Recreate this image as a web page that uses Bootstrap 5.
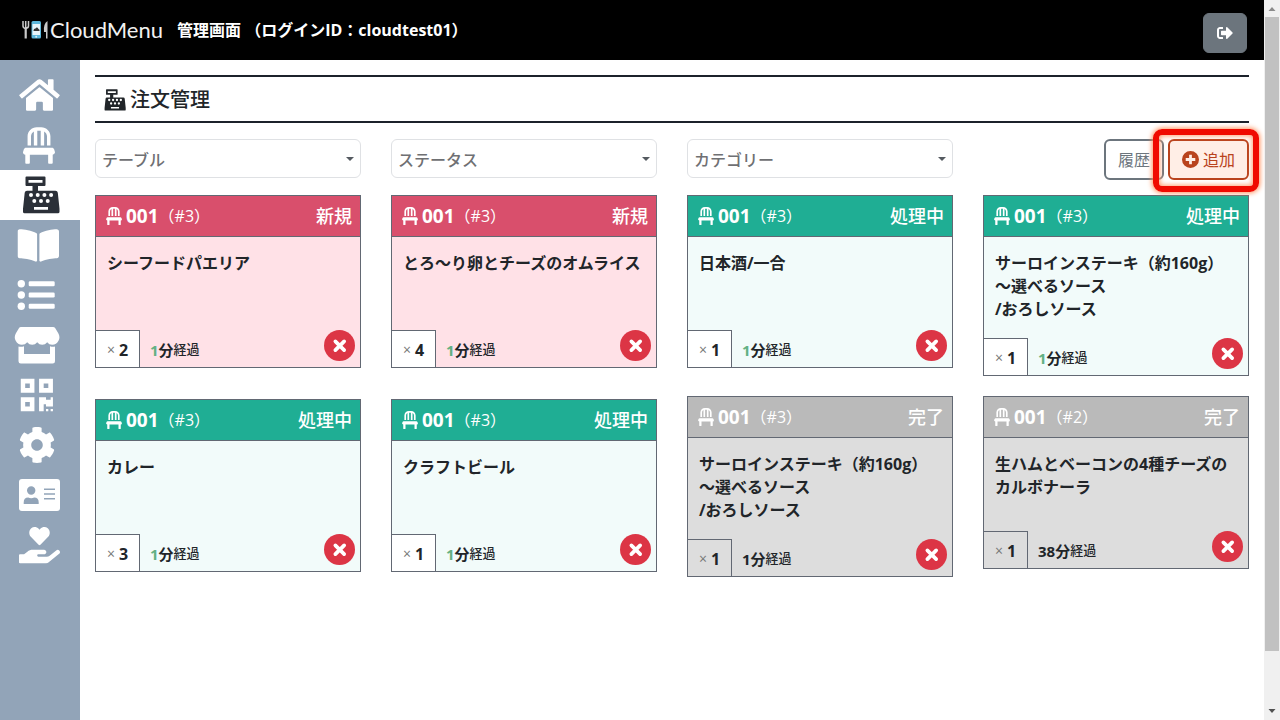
<!DOCTYPE html>
<html lang="ja">
<head>
<meta charset="utf-8">
<meta name="viewport" content="width=device-width, initial-scale=1">
<title>CloudMenu 管理画面 - 注文管理</title>
<link href="https://cdn.jsdelivr.net/npm/bootstrap@5.3.0/dist/css/bootstrap.min.css" rel="stylesheet">
<style>
  body { font-family: "Open Sans", "Noto Sans CJK JP", sans-serif; color: #212529; }
  .topbar { height: 60px; background: #000; padding: 0 17px 0 22px; }
  .brand-text { font: 400 22px/28px "Lato", sans-serif; color: #f1f1f1; }
  .topbar-title { font-size: 16px; line-height: 24px; margin-left: 14px; }
  .logout { width: 44px; height: 40px; margin-top: 5px; }
  .sidebar { width: 80px; background: #92a4b8; padding-top: 10px; }
  .side-link { display: block; height: 50px; color: #fff; }
  .side-link.active { background: #fff; color: #2b3038; }
  .side-link > svg { display: block; width: 80px; height: 50px; fill: currentColor; }
  .main-area { padding: 15px 15px 0; min-width: 0; }
  .page-title { font-size: 20px; line-height: 24px; border-top: 2px solid #1c222b; border-bottom: 2px solid #1c222b; padding: 11px 9px 9px; margin: 0 0 16px; }
  .page-title svg { width: 22px; height: 24px; }
  .board { --bs-gutter-x: 30px; }
  .filters { margin-bottom: 15px; }
  .filter { height: 39px; padding: 5px 30px 3px 6px; font-size: 16px; font-weight: 500; color: #6f7073; border-color: #dfe1e4;
    background-image: url("data:image/svg+xml,%3csvg xmlns='http://www.w3.org/2000/svg' viewBox='0 0 8 4'%3e%3cpath fill='%23555a60' d='M0 0h8L4 4z'/%3e%3c/svg%3e");
    background-size: 8px 4px; background-position: right 6px center; }
  .tool { height: 41px; border-width: 2px; font-size: 16px; line-height: 24px; padding: 0 12px; }
  .tool-add { color: #b9431d; background: #ffeee6; border-color: #b9431d; }
  .tool-add:hover { color: #fff; background: #b9431d; border-color: #b9431d; }
  .callout { position: absolute; inset: -10px -10px -12px -15px; border: 6px solid #f00a00; border-radius: 9px; box-shadow: 0 0 5px 1px #ff8f5a, inset 0 0 5px 1px #ff9e70; pointer-events: none; }
  .orders-new { row-gap: 31px; }
  .orders-old { row-gap: 20px; }
  .order { --line: #626873; border: 1px solid var(--line); }
  .order-head { height: 41px; border-bottom: 1px solid var(--line); color: #fff; padding: 0 8px 0 10px; background: var(--head); }
  .order-head svg { width: 16px; height: 18px; fill: currentColor; margin-right: 4px; }
  .order-no { font-size: 19px; font-weight: 700; line-height: 24px; }
  .order-seq { font-size: 16px; line-height: 24px; }
  .order-state { font-size: 18px; font-weight: 500; line-height: 24px; }
  .order-name { font-size: 16px; font-weight: 700; line-height: 23px; padding: 15px 11px 17px; min-height: 93px; }
  .order-foot { height: 37px; }
  .order-qty { width: 44px; border-top: 1px solid var(--line); border-right: 1px solid var(--line); background: #fff; font-size: 16px; font-weight: 700; padding-top: 1px; }
  .order-qty small { font-size: 14px; font-weight: 400; color: #777; }
  .order-time { font-size: 15px; font-weight: 700; padding: 3px 0 0 10px; }
  .order-time small { font-size: 13px; font-weight: 500; }
  .fresh { color: #62b083; }
  .cancel { width: 31px; height: 31px; margin-right: 5px; background: #dc3545; }
  .cancel svg { width: 31px; height: 31px; }
  .is-new { --head: #d94f6c; background: #ffe1e7; }
  .is-doing { --head: #1fae94; background: #f2fbfa; }
  .is-done { --head: #bababa; background: #dddddd; }
  .is-done .order-qty { background: transparent; }
  .scroll-strip { width: 16px; background: #f0f0f0; padding: 1px 1px; }
  .scroll-thumb { background: #c1c1c1; height: 88vh; }
  .scroll-strip svg { width: 14px; height: 16px; }
</style>
</head>
<body>
<svg class="d-none" aria-hidden="true">
  <symbol id="i-chair" viewBox="0 0 448 512"><path d="M112 128c0-29.500 16.200-55 40-68.900V256h48V48h48v208h48V59.100c23.800 13.900 40 39.400 40 68.900v128h48V128C384 57.300 326.700 0 256 0h-64C121.300 0 64 57.300 64 128v128h48zm334.300 213.900l-10.700-32c-4.400-13.100-16.600-21.900-30.400-21.900H42.700c-13.800 0-26 8.800-30.400 21.900l-10.700 32C-5.200 362.600 10.200 384 32 384v112c0 8.800 7.200 16 16 16h32c8.800 0 16-7.200 16-16V384h256v112c0 8.800 7.200 16 16 16h32c8.800 0 16-7.200 16-16V384c21.800 0 37.200-21.400 30.300-42.100z"/></symbol>
  <symbol id="i-register" viewBox="22 6 38 38"><path fill-rule="evenodd" d="M26.500 6.500h18q1 0 1 1v7.500q0 1-1 1H38v4.700h17.500q2 0 2.300 2l1.700 16v3q0 1.600-1.600 1.600H24.600Q23 43.300 23 41.700v-3l1.700-16q.3-2 2.300-2h5.500V16h-6q-1 0-1-1V7.500q0-1 1-1zM28.500 10v2.700h14V10zM34 37v2.800h14V37z M29 25a2 2 0 1 0 4 0a2 2 0 1 0-4 0M35.700 25a2 2 0 1 0 4 0a2 2 0 1 0-4 0M42.400 25a2 2 0 1 0 4 0a2 2 0 1 0-4 0M49.100 25a2 2 0 1 0 4 0a2 2 0 1 0-4 0M32.300 31a2 2 0 1 0 4 0a2 2 0 1 0-4 0M39 31a2 2 0 1 0 4 0a2 2 0 1 0-4 0M45.700 31a2 2 0 1 0 4 0a2 2 0 1 0-4 0"/></symbol>
  <symbol id="i-cross" viewBox="0 0 30 30"><path d="M11 11l8.500 8.500M19.500 11L11 19.500" fill="none" stroke="#fff" stroke-width="3.600" stroke-linecap="round"/></symbol>
</svg>

<div class="d-flex vh-100 overflow-hidden">
  <div class="d-flex flex-column flex-grow-1 overflow-hidden">
    <header class="topbar d-flex align-items-center flex-shrink-0">
      <a href="#" class="d-flex align-items-center text-decoration-none">
        <svg width="28" height="20" viewBox="0 0 28 20" aria-hidden="true">
          <path d="M1 1v5q0 2 2.500 2.500M6.500 1v5q0 2-3 2.500M3.700 1v7" fill="none" stroke="#c9c9c9" stroke-width="1.500"/><path d="M3.700 8v10.500" stroke="#c9c9c9" stroke-width="2.200"/>
          <rect x="9.500" y="1" width="9.500" height="17.500" rx="1.500" fill="#5db8dc"/><rect x="10.500" y="4" width="7.500" height="11" fill="#e8f5fa"/><path d="M11.500 10.500q0-2 2-2q1.500-2 3 .5q1.500.5 1 2h-6z" fill="#333"/><circle cx="14.200" cy="16.800" r="1" fill="#d4edf7"/>
          <path d="M25.500 1v17.500h-1.500V12h-2Q21 4 25.500 1z" fill="#c9c9c9"/>
        </svg>
        <span class="brand-text">CloudMenu</span>
      </a>
      <span class="topbar-title fw-bold text-white text-nowrap">管理画面 （ログインID：cloudtest01）</span>
      <button type="button" class="logout btn btn-secondary ms-auto p-0 d-flex align-items-center justify-content-center" aria-label="ログアウト">
        <svg width="16" height="16" viewBox="0 0 512 512" fill="#fff"><path d="M497 273L329 441c-15 15-41 4.500-41-17v-96H152c-13.300 0-24-10.700-24-24v-96c0-13.300 10.700-24 24-24h136V88c0-21.400 25.900-32 41-17l168 168c9.300 9.400 9.300 24.600 0 34zM192 436v-40c0-6.600-5.400-12-12-12H96c-17.700 0-32-14.300-32-32V160c0-17.700 14.300-32 32-32h84c6.600 0 12-5.400 12-12V76c0-6.600-5.400-12-12-12H96c-53 0-96 43-96 96v192c0 53 43 96 96 96h84c6.600 0 12-5.400 12-12z"/></svg>
      </button>
    </header>

    <div class="d-flex flex-grow-1 overflow-hidden">
      <nav class="sidebar flex-shrink-0" aria-label="メニュー">
        <a class="side-link" href="#" aria-label="ホーム"><svg viewBox="0 0 80 50"><svg x="19" y="7" width="41" height="36" viewBox="0 0 576 512"><path d="M280.370 148.260L96 300.110V464a16 16 0 0 0 16 16l112.060-.29a16 16 0 0 0 15.920-16V368a16 16 0 0 1 16-16h64a16 16 0 0 1 16 16v95.640a16 16 0 0 0 16 16.050L464 480a16 16 0 0 0 16-16V300L295.670 148.260a12.190 12.190 0 0 0-15.300 0zM571.600 251.470L488 182.560V44.050a12 12 0 0 0-12-12h-56a12 12 0 0 0-12 12v72.610L318.470 43a48 48 0 0 0-61 0L4.340 251.470a12 12 0 0 0-1.600 16.900l25.500 31A12 12 0 0 0 45.150 301l235.220-193.740a12.190 12.190 0 0 1 15.300 0L530.900 301a12 12 0 0 0 16.900-1.600l25.500-31a12 12 0 0 0-1.700-16.930z"/></svg></svg></a>
        <a class="side-link" href="#" aria-label="テーブル"><svg viewBox="0 0 80 50"><use href="#i-chair" x="23" y="7" width="32" height="37"/></svg></a>
        <a class="side-link active" href="#" aria-label="注文管理" aria-current="page"><svg viewBox="0 0 80 50"><use href="#i-register" x="22" y="6" width="38" height="38"/></svg></a>
        <a class="side-link" href="#" aria-label="メニューブック"><svg viewBox="0 0 80 50"><svg x="17.500" y="7" width="41.500" height="37" viewBox="0 0 576 512"><path d="M542.220 32.050c-54.800 3.110-163.720 14.430-230.960 55.590-4.640 2.840-7.270 7.890-7.270 13.170v363.870c0 11.550 12.630 18.850 23.280 13.490 69.180-34.820 169.230-44.320 218.700-46.920 16.890-.89 30.020-14.430 30.020-30.660V62.750c.01-17.710-15.350-31.740-33.770-30.700zM264.730 87.640C197.500 46.480 88.580 35.170 33.780 32.050 15.360 31.010 0 45.040 0 62.750V400.600c0 16.240 13.130 29.780 30.020 30.660 49.490 2.600 149.590 12.110 218.770 46.950 10.620 5.350 23.210-1.940 23.210-13.460V100.630c0-5.290-2.620-10.140-7.270-12.990z"/></svg></svg></a>
        <a class="side-link" href="#" aria-label="カテゴリー"><svg viewBox="0 0 80 50"><circle cx="21.300" cy="13.700" r="3.700"/><circle cx="21.300" cy="25" r="3.700"/><circle cx="21.300" cy="36.300" r="3.700"/><rect x="28.700" y="11.200" width="26" height="5" rx="1.300"/><rect x="28.700" y="22.500" width="26" height="5" rx="1.300"/><rect x="28.700" y="33.800" width="26" height="5" rx="1.300"/></svg></a>
        <a class="side-link" href="#" aria-label="店舗"><svg viewBox="0 0 80 50"><path fill-rule="evenodd" d="M21 7h32q1.500 0 2.300 1.300l3 5q2.200 4 .2 7.500-2 4-6.300 4-3.200 0-5-2.500-2 2.500-5 2.500t-5-2.500q-2 2.500-5 2.500t-5-2.500q-2 2.500-5.300 2.500-4.200 0-6.200-4-2-3.500.2-7.500l3-5Q19.500 7 21 7zM18.500 26.500q3 .6 5.500-.3V34h26v-7.800q2.500.9 5 .3v14.700q0 2.300-2.300 2.300H20.800q-2.300 0-2.300-2.300z"/></svg></a>
        <a class="side-link" href="#" aria-label="QRコード"><svg viewBox="0 0 80 50"><svg x="20.500" y="6.500" width="32.500" height="37" viewBox="0 0 448 512"><path d="M0 224h192V32H0v192zM64 96h64v64H64V96zm192-64v192h192V32H256zm128 128h-64V96h64v64zM0 480h192V288H0v192zm64-128h64v64H64v-64zm352-64h32v128h-96v-32h-32v96h-64V288h96v32h64v-32zm0 160h32v32h-32v-32zm-64 0h32v32h-32v-32z"/></svg></svg></a>
        <a class="side-link" href="#" aria-label="設定"><svg viewBox="0 0 80 50"><svg x="18.500" y="6.500" width="37" height="37" viewBox="0 0 512 512"><path d="M487.400 315.700l-42.600-24.600c4.300-23.200 4.300-47 0-70.200l42.600-24.600c4.900-2.800 7.100-8.600 5.500-14-11.100-35.600-30-67.800-54.700-94.600-3.800-4.100-10-5.100-14.800-2.300L380.800 110c-17.900-15.400-38.500-27.300-60.800-35.100V25.800c0-5.600-3.900-10.500-9.400-11.700-36.700-8.200-74.300-7.800-109.200 0-5.500 1.200-9.400 6.100-9.400 11.700V75c-22.200 7.900-42.800 19.800-60.800 35.100L88.700 85.500c-4.900-2.800-11-1.900-14.800 2.300-24.700 26.700-43.600 58.900-54.700 94.600-1.700 5.400.6 11.200 5.500 14L67.300 221c-4.300 23.200-4.300 47 0 70.200l-42.600 24.600c-4.900 2.800-7.100 8.600-5.500 14 11.100 35.600 30 67.800 54.700 94.600 3.800 4.100 10 5.100 14.800 2.300l42.600-24.600c17.900 15.400 38.500 27.300 60.800 35.100v49.200c0 5.600 3.900 10.500 9.400 11.700 36.700 8.200 74.300 7.800 109.200 0 5.500-1.200 9.400-6.100 9.400-11.700v-49.200c22.200-7.900 42.800-19.800 60.800-35.100l42.600 24.600c4.900 2.800 11 1.900 14.800-2.300 24.700-26.700 43.600-58.900 54.700-94.600 1.500-5.500-.7-11.300-5.600-14.100zM256 336c-44.100 0-80-35.900-80-80s35.900-80 80-80 80 35.900 80 80-35.900 80-80 80z"/></svg></svg></a>
        <a class="side-link" href="#" aria-label="アカウント"><svg viewBox="0 0 80 50"><path fill-rule="evenodd" d="M22 9h35q3 0 3 3v26q0 3-3 3H22q-3 0-3-3V12q0-3 3-3zM27 20.500a4.200 4.200 0 1 0 8.400 0a4.200 4.200 0 1 0-8.400 0M23.700 34h15v-1.500q0-5-4.500-5-3 1.300-6 0-4.500 0-4.500 5zM44 18.500v1.600h11v-1.600zM44 23.200v1.600h11v-1.600zM44 28v1.600h11V28z"/></svg></a>
        <a class="side-link" href="#" aria-label="サポート"><svg viewBox="0 0 80 50"><svg x="19" y="7" width="41" height="36.500" viewBox="0 0 576 512"><path d="M275.300 250.500c7 7.400 18.400 7.400 25.500 0l108.900-114.200c31.600-33.200 29.800-88.200-5.600-118.800-30.800-26.700-76.700-21.900-104.900 7.700L288 36.900l-11.100-11.600C248.700-4.400 202.800-9.200 172 17.500c-35.300 30.600-37.200 85.600-5.600 118.800l108.900 114.200zm290 77.600c-11.800-10.700-30.200-10-42.600 0L430.300 402c-11.300 9.100-25.400 14-40 14H272c-8.800 0-16-7.200-16-16s7.200-16 16-16h78.300c15.900 0 30.700-10.900 33.300-26.600 3.300-20-12.100-37.400-31.600-37.400H192c-27 0-53.100 9.300-74.100 26.300L71.400 384H16c-8.800 0-16 7.200-16 16v96c0 8.800 7.200 16 16 16h356.800c14.500 0 28.600-4.900 40-14L564 377c15.200-12.100 16.400-35.300 1.300-48.900z"/></svg></svg></a>
      </nav>

      <main class="main-area flex-grow-1">
        <h1 class="page-title d-flex align-items-center gap-1"><svg fill="currentColor" aria-hidden="true"><use href="#i-register"/></svg>注文管理</h1>

        <form class="row board filters">
          <div class="col-3"><select class="form-select filter" aria-label="テーブル"><option>テーブル</option></select></div>
          <div class="col-3"><select class="form-select filter" aria-label="ステータス"><option>ステータス</option></select></div>
          <div class="col-3"><select class="form-select filter" aria-label="カテゴリー"><option>カテゴリー</option></select></div>
          <div class="col-3 d-flex justify-content-end gap-1">
            <button type="button" class="btn btn-outline-secondary tool">履歴</button>
            <div class="position-relative">
              <button type="button" class="btn tool tool-add d-flex align-items-center gap-1">
                <svg width="17" height="17" viewBox="0 0 16 16" aria-hidden="true"><path fill="currentColor" fill-rule="evenodd" d="M8 0a8 8 0 1 0 0 16A8 8 0 0 0 8 0zM6.700 3.500h2.600v3.200h3.200v2.600H9.300v3.200H6.700V9.300H3.500V6.700h3.200z"/></svg>
                追加
              </button>
              <span class="callout"></span>
            </div>
          </div>
        </form>

        <div class="row board">
          <div class="col-6">
            <div class="row board orders-new">
              <div class="col-6"><article class="order is-new">
                <div class="order-head d-flex align-items-center"><svg><use href="#i-chair"/></svg><span class="order-no">001</span><span class="order-seq">（#3）</span><span class="order-state ms-auto">新規</span></div>
                <div class="order-name">シーフードパエリア</div>
                <div class="order-foot d-flex"><div class="order-qty d-flex align-items-center justify-content-center gap-1"><small>×</small>2</div><div class="order-time d-flex align-items-center"><span class="fresh">1</span>分<small>経過</small></div><button type="button" class="cancel btn rounded-circle border-0 p-0 ms-auto d-flex" aria-label="取消"><svg><use href="#i-cross"/></svg></button></div>
              </article></div>
              <div class="col-6"><article class="order is-new">
                <div class="order-head d-flex align-items-center"><svg><use href="#i-chair"/></svg><span class="order-no">001</span><span class="order-seq">（#3）</span><span class="order-state ms-auto">新規</span></div>
                <div class="order-name">とろ～り卵とチーズのオムライス</div>
                <div class="order-foot d-flex"><div class="order-qty d-flex align-items-center justify-content-center gap-1"><small>×</small>4</div><div class="order-time d-flex align-items-center"><span class="fresh">1</span>分<small>経過</small></div><button type="button" class="cancel btn rounded-circle border-0 p-0 ms-auto d-flex" aria-label="取消"><svg><use href="#i-cross"/></svg></button></div>
              </article></div>
              <div class="col-6"><article class="order is-doing">
                <div class="order-head d-flex align-items-center"><svg><use href="#i-chair"/></svg><span class="order-no">001</span><span class="order-seq">（#3）</span><span class="order-state ms-auto">処理中</span></div>
                <div class="order-name">カレー</div>
                <div class="order-foot d-flex"><div class="order-qty d-flex align-items-center justify-content-center gap-1"><small>×</small>3</div><div class="order-time d-flex align-items-center"><span class="fresh">1</span>分<small>経過</small></div><button type="button" class="cancel btn rounded-circle border-0 p-0 ms-auto d-flex" aria-label="取消"><svg><use href="#i-cross"/></svg></button></div>
              </article></div>
              <div class="col-6"><article class="order is-doing">
                <div class="order-head d-flex align-items-center"><svg><use href="#i-chair"/></svg><span class="order-no">001</span><span class="order-seq">（#3）</span><span class="order-state ms-auto">処理中</span></div>
                <div class="order-name">クラフトビール</div>
                <div class="order-foot d-flex"><div class="order-qty d-flex align-items-center justify-content-center gap-1"><small>×</small>1</div><div class="order-time d-flex align-items-center"><span class="fresh">1</span>分<small>経過</small></div><button type="button" class="cancel btn rounded-circle border-0 p-0 ms-auto d-flex" aria-label="取消"><svg><use href="#i-cross"/></svg></button></div>
              </article></div>
            </div>
          </div>
          <div class="col-6">
            <div class="row board orders-old">
              <div class="col-6"><article class="order is-doing">
                <div class="order-head d-flex align-items-center"><svg><use href="#i-chair"/></svg><span class="order-no">001</span><span class="order-seq">（#3）</span><span class="order-state ms-auto">処理中</span></div>
                <div class="order-name">日本酒/一合</div>
                <div class="order-foot d-flex"><div class="order-qty d-flex align-items-center justify-content-center gap-1"><small>×</small>1</div><div class="order-time d-flex align-items-center"><span class="fresh">1</span>分<small>経過</small></div><button type="button" class="cancel btn rounded-circle border-0 p-0 ms-auto d-flex" aria-label="取消"><svg><use href="#i-cross"/></svg></button></div>
              </article></div>
              <div class="col-6"><article class="order is-doing">
                <div class="order-head d-flex align-items-center"><svg><use href="#i-chair"/></svg><span class="order-no">001</span><span class="order-seq">（#3）</span><span class="order-state ms-auto">処理中</span></div>
                <div class="order-name">サーロインステーキ（約160g）<br>～選べるソース<br>/おろしソース</div>
                <div class="order-foot d-flex"><div class="order-qty d-flex align-items-center justify-content-center gap-1"><small>×</small>1</div><div class="order-time d-flex align-items-center"><span class="fresh">1</span>分<small>経過</small></div><button type="button" class="cancel btn rounded-circle border-0 p-0 ms-auto d-flex" aria-label="取消"><svg><use href="#i-cross"/></svg></button></div>
              </article></div>
              <div class="col-6"><article class="order is-done">
                <div class="order-head d-flex align-items-center"><svg><use href="#i-chair"/></svg><span class="order-no">001</span><span class="order-seq">（#3）</span><span class="order-state ms-auto">完了</span></div>
                <div class="order-name">サーロインステーキ（約160g）<br>～選べるソース<br>/おろしソース</div>
                <div class="order-foot d-flex"><div class="order-qty d-flex align-items-center justify-content-center gap-1"><small>×</small>1</div><div class="order-time d-flex align-items-center">1分<small>経過</small></div><button type="button" class="cancel btn rounded-circle border-0 p-0 ms-auto d-flex" aria-label="取消"><svg><use href="#i-cross"/></svg></button></div>
              </article></div>
              <div class="col-6"><article class="order is-done">
                <div class="order-head d-flex align-items-center"><svg><use href="#i-chair"/></svg><span class="order-no">001</span><span class="order-seq">（#2）</span><span class="order-state ms-auto">完了</span></div>
                <div class="order-name">生ハムとベーコンの4種チーズのカルボナーラ</div>
                <div class="order-foot d-flex"><div class="order-qty d-flex align-items-center justify-content-center gap-1"><small>×</small>1</div><div class="order-time d-flex align-items-center">38分<small>経過</small></div><button type="button" class="cancel btn rounded-circle border-0 p-0 ms-auto d-flex" aria-label="取消"><svg><use href="#i-cross"/></svg></button></div>
              </article></div>
            </div>
          </div>
        </div>
      </main>
    </div>
  </div>
  <div class="scroll-strip d-flex flex-column flex-shrink-0" aria-hidden="true">
    <svg viewBox="0 0 14 16"><path d="M3.500 10h7L7 6z" fill="#8a8a8a"/></svg>
    <div class="scroll-thumb"></div>
    <svg class="mt-auto flex-shrink-0" viewBox="0 0 14 16"><path d="M3.500 6h7L7 10z" fill="#505050"/></svg>
  </div>
</div>
<script src="https://cdn.jsdelivr.net/npm/bootstrap@5.3.0/dist/js/bootstrap.bundle.min.js"></script>
</body>
</html>
